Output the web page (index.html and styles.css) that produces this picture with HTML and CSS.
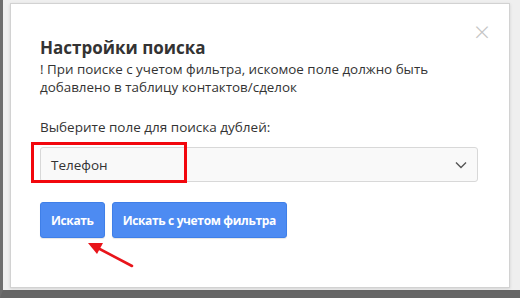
FILE: index.html
```html
<!DOCTYPE html>
<html lang="ru">
<head>
    <meta charset="UTF-8">
    <meta name="viewport" content="width=device-width, initial-scale=1.0">
    <title>Настройки поиска</title>
    <link rel="stylesheet" href="styles.css">
</head>
<body>
    <div class="screen">
        <div class="modal">
            <span class="close">&times;</span>

            <h2 class="title">Настройки поиска</h2>
            <p class="note">! При поиске с учетом фильтра, искомое поле должно быть добавлено в таблицу контактов/сделок</p>

            <label class="label">Выберите поле для поиска дублей:</label>
            <div class="select">
                <span>Телефон</span>
                <svg class="chevron" width="12" height="8" viewBox="0 0 12 8">
                    <path d="M1 1.5 L6 6.5 L11 1.5" fill="none" stroke="#555" stroke-width="1.4"/>
                </svg>
                <div class="highlight"></div>
            </div>

            <div class="actions">
                <button class="btn">Искать</button>
                <button class="btn">Искать с учетом фильтра</button>
                <svg class="arrow" width="50" height="30" viewBox="0 0 50 30">
                    <line x1="46" y1="26" x2="8" y2="6" stroke="#e8151b" stroke-width="2.6" stroke-linecap="round"/>
                    <polygon points="2,3 17,3 11,14" fill="#e8151b"/>
                </svg>
            </div>
        </div>
    </div>
</body>
</html>
```

FILE: styles.css
```css
* {
    box-sizing: border-box;
}
body {
    margin: 0;
    font-family: 'Open Sans', 'Noto Sans', sans-serif;
    color: #333;
}
.screen {
    width: 520px;
    height: 298px;
    background: #efefef;
    border-left: 3px solid #6e6e6e;
    border-bottom: 8px solid #666;
    padding: 3px 10px 0 7px;
}
.modal {
    position: relative;
    width: 500px;
    height: 285px;
    background: #fff;
    border: 1px solid #d2d2d2;
    box-shadow: 0 1px 3px rgba(0,0,0,0.12);
    padding: 32px 31px 0 29px;
}
.close {
    position: absolute;
    top: 12px;
    right: 19px;
    font-size: 28px;
    font-weight: 300;
    line-height: 30px;
    color: #c4c4c4;
}
.title {
    margin: 0;
    font-size: 17px;
    line-height: 24px;
    font-weight: 700;
    color: #333;
}
.note {
    margin: 0;
    font-size: 13.4px;
    line-height: 18px;
}
.label {
    display: block;
    margin-top: 22px;
    font-size: 13.5px;
    line-height: 18px;
}
.select {
    position: relative;
    margin-top: 11px;
    height: 35px;
    width: 438px;
    background: #f9f9f9;
    border: 1px solid #d8d8d8;
    border-radius: 3px;
    display: flex;
    align-items: center;
    justify-content: space-between;
    padding: 0 10px 0 10px;
    font-size: 13.5px;
}
.chevron {
    margin-top: 1px;
}
.highlight {
    position: absolute;
    left: -10px;
    top: -6px;
    width: 156px;
    height: 41px;
    border: 3px solid #f2070d;
}
.actions {
    position: relative;
    margin-top: 20px;
    display: flex;
    gap: 7px;
}
.btn {
    height: 36px;
    padding: 0 10px;
    background: #4d8bf2;
    color: #fff;
    border: 1px solid #3f7fe8;
    border-radius: 3px;
    font-family: 'Open Sans', 'Noto Sans', sans-serif;
    font-size: 12px;
    font-weight: 700;
    letter-spacing: -0.35px;
    box-shadow: 0 1px 1px rgba(0,0,0,0.1);
}
.arrow {
    position: absolute;
    left: 46px;
    top: 38px;
}
```
